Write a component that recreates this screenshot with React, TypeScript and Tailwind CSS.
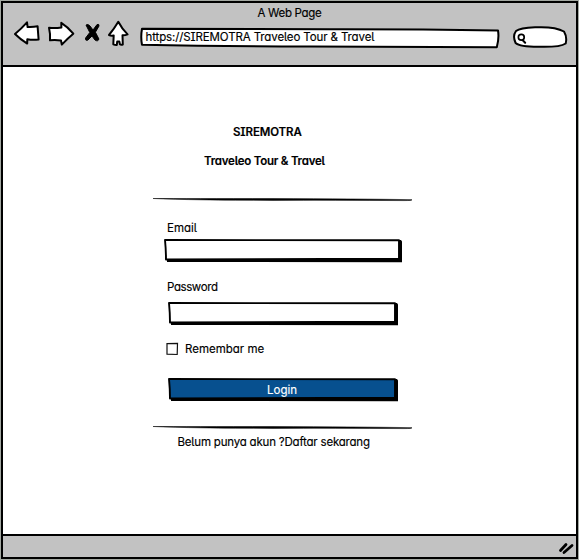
import type { ReactNode } from "react";

const ink = {
  stroke: "#000",
  strokeWidth: 2,
  strokeLinejoin: "round" as const,
  strokeLinecap: "round" as const,
};

function Toolbar() {
  return (
    <div className="flex h-[45px] items-start">
      <svg className="ml-[11px] h-[28px] w-[26px] shrink-0" viewBox="14 20 26 28">
        <path d="M15 34Q21 29 27 22.3L27.6 27Q33 27.3 37.6 26.3Q38 32 38.6 39.5Q33 40.3 27.3 39.3L27.2 43.6Q20 39 15 34Z" fill="#fff" {...ink} />
      </svg>
      <svg className="ml-[7px] h-[28px] w-[29px] shrink-0" viewBox="47 20 29 28">
        <path d="M49 27.8Q55 28.5 61.4 27.5L61.3 22.8Q68 27 73.3 33.7Q68 38 61.8 44.6L61 40.5Q55 39.5 50 40.3Q50.5 34 49 27.8Z" fill="#fff" {...ink} />
      </svg>
      <svg className="ml-[7px] h-[28px] w-[19px] shrink-0" viewBox="83 20 19 28">
        <path d="M86 25Q88 23.6 90 26L93 30L97 24.6Q99.3 23.6 99 26L95.4 32.2L98.9 39Q98 42 95 40L92 36L88 40Q85 41.3 85.6 38L89.8 32.5Z" fill="#000" stroke="#000" strokeWidth="1" strokeLinejoin="round" />
      </svg>
      <svg className="ml-[5px] h-[28px] w-[23px] shrink-0" viewBox="107 20 23 28">
        <path d="M118.3 21.8Q122 29 127.6 34.4Q125 35.5 122.5 35.3L122.8 44.5Q121 45.2 119.9 44.3L119.4 41.6L117.2 41.6L116.8 44.9Q115 45 113.3 44.3L113.7 35.5Q111 36 109 35Q114 29 118.3 21.8Z" fill="#fff" {...ink} />
      </svg>
      <div className="relative ml-[10px] mt-[6px] h-[23px] w-[360px] shrink-0">
        <svg className="absolute inset-0 h-full w-full" viewBox="140 26 360 23">
          <path d="M142 28.7Q240 29.4 330 29.3T498 30.5Q499.3 38 496.8 47.2Q400 46.7 310 46.5T142 44.8Q140.5 37 142 28.7Z" fill="#fff" {...ink} />
        </svg>
        <span className="relative block whitespace-nowrap pl-[5.5px] pt-[2px] leading-[18px] tracking-[-0.12px]">
          https://SIREMOTRA Traveleo Tour &amp; Travel
        </span>
      </div>
      <svg className="ml-[12px] mt-[5px] h-[24px] w-[56px] shrink-0" viewBox="512 25 56 24">
        <path d="M516 31Q520 28 535 27.3Q555 26.3 564 31.5Q567.3 37 565.7 43.5Q560 47.3 540 46.8Q520 47 515.6 43Q512.3 36 516 31Z" fill="#fff" {...ink} />
        <circle cx="521.3" cy="37.3" r="2.9" fill="none" {...ink} strokeWidth="1.7" />
        <path d="M522.5 40L525.2 42.8" fill="none" {...ink} />
      </svg>
    </div>
  );
}

function Divider() {
  return (
    <svg className="block h-[4px] w-[260px]" viewBox="0 0 260 4">
      <path d="M0 .5Q35 .5 120 .5Q205 .7 259 1.7Q259 2.6 251 2.6Q180 2.2 120 2.4Q40 2.3 0 .5Z" fill="#000" stroke="#000" strokeWidth=".5" />
    </svg>
  );
}

function Box({ wide, fill, children }: { wide?: boolean; fill: string; children?: ReactNode }) {
  const w = wide ? 239 : 231;
  return (
    <div className={`relative h-[24px] ${wide ? "w-[239px]" : "w-[231px]"}`}>
      <svg className="absolute inset-0 h-full w-full" viewBox={`0 0 ${w} 24`}>
        <path d={`M3 20L${w - 4} 20V1H${w - 2}L${w - 1} 2.5V23.3L3 23Z`} fill="#000" />
        <path d={`M1 1Q100 .7 ${w - 4} 1.2L${w - 4} 19.6Q120 20 2 20.5Q2 11 1 1Z`} fill={fill} stroke="#000" strokeWidth="1.9" strokeLinejoin="round" />
      </svg>
      <span className="relative flex h-[23px] items-center justify-center pr-[3px] pt-[2px] text-white">{children}</span>
    </div>
  );
}

export default function App() {
  return (
    <div
      className="flex h-[560px] w-[579px] flex-col bg-[#a3a8a2] p-px text-[11.5px] text-black [-webkit-text-stroke:0.15px]"
      style={{ fontFamily: 'Inter, "Noto Sans", sans-serif', fontFeatureSettings: '"cv11", "cv08", "cv05"' }}
    >
      <div className="flex min-h-0 flex-1 flex-col border-2 border-black bg-white">
        <header className="h-[64px] shrink-0 border-b-2 border-black bg-[#c2c2c2]">
          <div className="flex h-[17px] items-center justify-center whitespace-nowrap pt-[3px] leading-[17px] tracking-[-0.3px]">A Web Page</div>
          <Toolbar />
        </header>
        <main className="flex min-h-0 flex-1 flex-col items-start pl-[149px]">
          <h1 className="ml-[81px] mt-[56px] h-[18px] whitespace-nowrap font-semibold leading-[18px] tracking-[-0.13px]">SIREMOTRA</h1>
          <h2 className="ml-[52px] mt-[11px] h-[18px] whitespace-nowrap font-semibold leading-[18px] tracking-[-0.22px]">Traveleo Tour &amp; Travel</h2>
          <div className="ml-px mt-[28px]"><Divider /></div>
          <label className="ml-[15px] mt-[17px] h-[18px] leading-[18px]">Email</label>
          <div className="ml-[12px] mt-[2px]"><Box wide fill="#fff" /></div>
          <label className="ml-[15px] mt-[15px] h-[18px] leading-[18px] tracking-[-0.4px]">Password</label>
          <div className="ml-[16px] mt-[6px]"><Box fill="#fff" /></div>
          <div className="ml-[14px] mt-[13px] flex h-[20px] items-center">
            <svg className="h-[14px] w-[13px]" viewBox="0 0 13 14">
              <path d="M1 1.6L11.5 1.4L11.2 12.5L1 12.2Z" fill="#fff" stroke="#111" strokeWidth="1.2" />
            </svg>
            <span className="ml-[6px] whitespace-nowrap pt-[1px]">Remembar me</span>
          </div>
          <div className="ml-[16px] mt-[19px]"><Box fill="#07508f">Login</Box></div>
          <div className="ml-px mt-[24px]"><Divider /></div>
          <p className="ml-[25.5px] mt-[3px] h-[18px] whitespace-nowrap leading-[18px] tracking-[-0.2px]">Belum punya akun ?Daftar sekarang</p>
        </main>
        <footer className="flex h-[23px] shrink-0 items-center justify-end border-t-2 border-black bg-[#c2c2c2] pr-[2px]">
          <svg className="mt-[2px] h-[14px] w-[16px]" viewBox="558 541 16 14">
            <path d="M560.5 550.5L566 544.5M564 552.5L572 545.5" stroke="#000" strokeWidth="2.8" strokeLinecap="round" />
          </svg>
        </footer>
      </div>
    </div>
  );
}
